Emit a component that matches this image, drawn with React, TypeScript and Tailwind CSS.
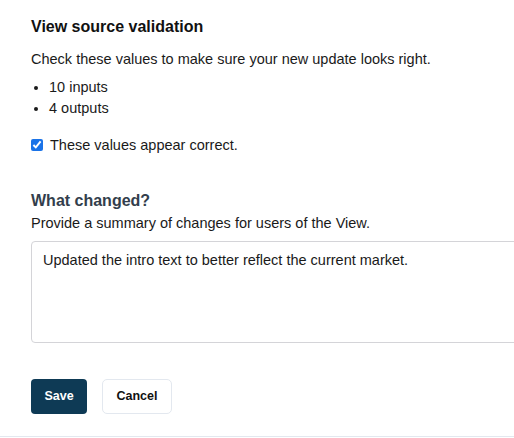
import React from 'react';

export default function App() {
  return (
    <div className="w-[514px] h-[438px] overflow-hidden bg-white font-['Liberation_Sans',Arial,sans-serif] text-[#1a1a1a]">
      <div className="h-[437px] border-b border-[#e3e8ef] pl-[31px]">
        <h2 className="pt-[17px] text-[16px] font-bold leading-[20px] text-[#111]">View source validation</h2>
        <p className="mt-[13px] text-[14.5px] leading-[18px]">Check these values to make sure your new update looks right.</p>
        <ul className="mt-[9px] list-disc pl-[18px] text-[14.5px] leading-[21px]">
          <li>10 inputs</li>
          <li>4 outputs</li>
        </ul>
        <label className="mt-[17px] flex items-center gap-[7px] text-[14.5px] leading-[18px]">
          <input type="checkbox" defaultChecked className="m-0 h-[12px] w-[12px] accent-[#1a73e8]" />
          These values appear correct.
        </label>
        <h3 className="mt-[37px] text-[16px] font-bold leading-[20px] text-[#333e4c]">What changed?</h3>
        <p className="mt-[3px] text-[14.5px] leading-[18px]">Provide a summary of changes for users of the View.</p>
        <div className="mt-[9px] h-[102px] w-[500px] rounded-[4px] border border-[#d4d4d8] px-[11px] py-[9px] text-[14.5px] leading-[18px]">
          Updated the intro text to better reflect the current market.
        </div>
        <div className="mt-[36px] flex gap-[15px]">
          <button className="h-[35px] w-[56px] rounded-[4px] bg-[#0e3a55] text-[12.5px] font-bold text-white">Save</button>
          <button className="h-[35px] w-[70px] rounded-[5px] border border-[#e3e8ef] bg-white text-[12.5px] font-bold text-[#111]">Cancel</button>
        </div>
      </div>
    </div>
  );
}
